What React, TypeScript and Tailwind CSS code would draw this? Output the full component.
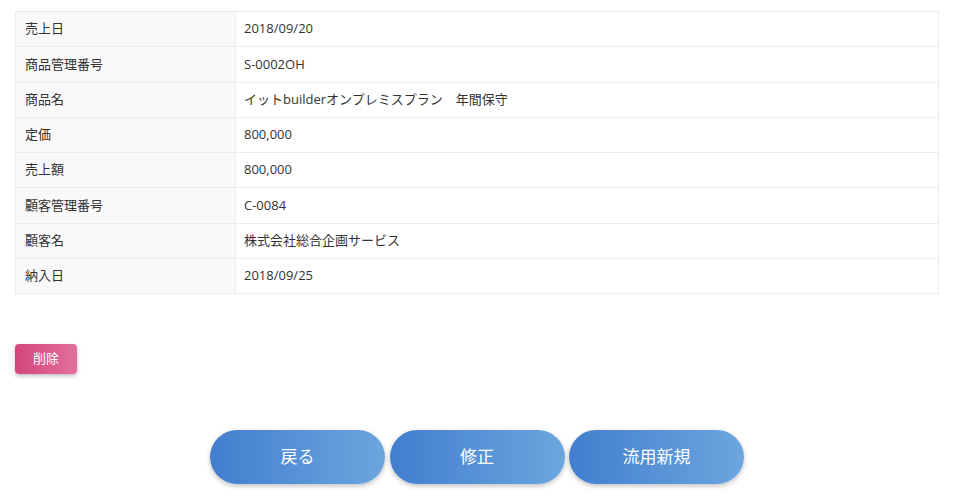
const rows: [string, string][] = [
  ["売上日", "2018/09/20"],
  ["商品管理番号", "S-0002OH"],
  ["商品名", "イットbuilderオンプレミスプラン　年間保守"],
  ["定価", "800,000"],
  ["売上額", "800,000"],
  ["顧客管理番号", "C-0084"],
  ["顧客名", "株式会社総合企画サービス"],
  ["納入日", "2018/09/25"],
];

const font = { fontFamily: '"Open Sans", "Noto Sans CJK JP", sans-serif' };

export default function App() {
  return (
    <div className="min-h-[498px] w-[954px] bg-white text-[#333]" style={font}>
      <div className="px-[15px] pt-[11px]">
        <table className="w-full border-collapse text-[13px]">
          <tbody>
            {rows.map(([label, value]) => (
              <tr key={label} className="h-[35.25px]">
                <td className="w-[220px] border border-[#ebebeb] bg-[#f9f9f9] pl-[9px] align-middle">
                  {label}
                </td>
                <td className="border border-[#ebebeb] pl-[8px] align-middle">{value}</td>
              </tr>
            ))}
          </tbody>
        </table>
      </div>

      <div className="mt-[50px] px-[15px]">
        <button className="h-[30px] w-[62px] rounded-[4px] bg-gradient-to-r from-[#d4467a] to-[#e16f9c] text-[13px] text-white shadow-[0_2px_4px_rgba(0,0,0,0.25)]">
          削除
        </button>
      </div>

      <div className="mt-[56px] flex justify-center gap-[4.5px]">
        {["戻る", "修正", "流用新規"].map((t) => (
          <button
            key={t}
            className="h-[54px] w-[175px] rounded-full bg-gradient-to-r from-[#437ecf] to-[#6ba6de] text-[17px] text-white shadow-[0_2px_5px_rgba(0,0,0,0.25)]"
          >
            {t}
          </button>
        ))}
      </div>
    </div>
  );
}
